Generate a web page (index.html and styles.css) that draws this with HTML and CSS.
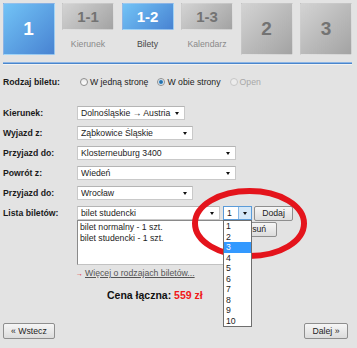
FILE: index.html
```html
<!DOCTYPE html>
<html lang="pl">
<head>
    <meta charset="UTF-8">
    <meta name="viewport" content="width=device-width, initial-scale=1.0">
    <title>Bilety</title>
    <link rel="stylesheet" href="styles.css">
</head>
<body>
    <div class="page">
        <div class="steps">
            <div class="step"><div class="box big blue">1</div></div>
            <div class="step"><div class="box small gray">1-1</div><span class="step-label">Kierunek</span></div>
            <div class="step"><div class="box small blue">1-2</div><span class="step-label current">Bilety</span></div>
            <div class="step"><div class="box small gray">1-3</div><span class="step-label">Kalendarz</span></div>
            <div class="step"><div class="box big gray">2</div></div>
            <div class="step"><div class="box big gray">3</div></div>
        </div>
        <div class="rule"></div>

        <div class="type-row">
            <span class="label">Rodzaj biletu:</span>
            <label class="radio"><input type="radio" name="typ"><span>W jedną stronę</span></label>
            <label class="radio"><input type="radio" name="typ" checked><span>W obie strony</span></label>
            <label class="radio disabled"><input type="radio" name="typ" disabled><span>Open</span></label>
        </div>

        <div class="rows">
            <div class="row">
                <span class="label">Kierunek:</span>
                <div class="sel w-kier"><span class="val">Dolnośląskie → Austria</span><span class="arrow"></span></div>
            </div>
            <div class="row">
                <span class="label">Wyjazd z:</span>
                <div class="sel w-mid"><span class="val">Ząbkowice Śląskie</span><span class="arrow"></span></div>
            </div>
            <div class="row">
                <span class="label">Przyjazd do:</span>
                <div class="sel w-long"><span class="val">Klosterneuburg 3400</span><span class="arrow"></span></div>
            </div>
            <div class="row">
                <span class="label">Powrót z:</span>
                <div class="sel w-long"><span class="val">Wiedeń</span><span class="arrow"></span></div>
            </div>
            <div class="row">
                <span class="label">Przyjazd do:</span>
                <div class="sel w-mid"><span class="val">Wrocław</span><span class="arrow"></span></div>
            </div>
            <div class="row tight">
                <span class="label">Lista biletów:</span>
                <div class="sel w-ticket"><span class="val">bilet studencki</span><span class="arrow"></span></div>
                <div class="sel qty focused"><span class="val">1</span><span class="arrow-btn"><span class="arrow"></span></span></div>
                <button class="btn add" type="button">Dodaj</button>
            </div>
            <div class="list-row">
                <div class="listbox">
                    <div>bilet normalny - 1 szt.</div>
                    <div>bilet studencki - 1 szt.</div>
                </div>
                <button class="btn remove" type="button">Usuń</button>
            </div>
            <div class="more">
                <span class="more-arrow">→</span><a href="#">Więcej o rodzajach biletów...</a>
            </div>
        </div>

        <div class="total">Cena łączna: <span class="price">559 zł</span></div>

        <div class="nav">
            <button class="btn" type="button">« Wstecz</button>
            <button class="btn" type="button">Dalej »</button>
        </div>

        <svg class="mark" width="357" height="348" viewBox="0 0 357 348">
            <ellipse cx="249.5" cy="223.5" rx="54.5" ry="32.5" fill="none" stroke="#e4141c" stroke-width="6"/>
        </svg>

        <div class="dropdown">
            <div>1</div>
            <div>2</div>
            <div class="hl">3</div>
            <div>4</div>
            <div>5</div>
            <div>6</div>
            <div>7</div>
            <div>8</div>
            <div>9</div>
            <div>10</div>
        </div>
    </div>
</body>
</html>
```

FILE: styles.css
```css
body {
    margin: 0;
    background-color: #e3e3e3;
    font-family: "Liberation Sans", Arial, sans-serif;
    font-size: 8.7px;
    color: #1c1c1c;
}
.page {
    position: relative;
    width: 357px;
    height: 348px;
    padding: 3px 0 0 2.5px;
    box-sizing: border-box;
    overflow: hidden;
}

/* steps header */
.steps {
    display: flex;
    gap: 7.5px;
    align-items: flex-start;
    height: 52px;
}
.step {
    width: 52px;
    display: flex;
    flex-direction: column;
    align-items: center;
}
.box {
    width: 52px;
    display: flex;
    align-items: center;
    justify-content: center;
    font-weight: bold;
    box-sizing: border-box;
    border: 1px solid rgba(255,255,255,0.35);
}
.box.big {
    height: 52px;
    font-size: 19px;
}
.box.small {
    height: 27px;
    font-size: 15px;
}
.box.blue {
    background: linear-gradient(135deg, #72c3f6, #4883d2);
    color: #fff;
}
.box.gray {
    background: linear-gradient(135deg, #d3d3d3, #a3a3a3);
    color: #737373;
}
.step-label {
    margin-top: 9px;
    color: #8a8a8a;
}
.step-label.current {
    color: #474747;
}
.rule {
    margin-top: 7px;
    width: 349.5px;
    height: 1px;
    background-color: #4a86cc;
    border-top: 1px solid #8cb5e5;
    box-shadow: 0 1px 0 #f3f3f3;
}

/* ticket type */
.label {
    width: 74px;
    flex-shrink: 0;
    padding-left: 0.5px;
    font-weight: bold;
    color: #1a1a1a;
}
.type-row {
    display: flex;
    align-items: center;
    height: 14px;
    margin-top: 11px;
}
.radio {
    display: flex;
    align-items: center;
    margin-left: 3px;
    margin-right: 6px;
}
.radio input {
    appearance: none;
    width: 8px;
    height: 8px;
    margin: 0 2px 0 0;
    border: 1px solid #8d8d8d;
    border-radius: 50%;
    background: linear-gradient(#e8e8e8, #fff);
    box-sizing: border-box;
}
.radio input:checked {
    background: radial-gradient(circle, #1d5b8e 0, #3e8ac4 1.6px, #cfe2f2 2.4px, #fff 3px);
}
.radio.disabled {
    color: #a8a8a8;
}
.radio.disabled input {
    border-color: #c6c6c6;
    background: #ececec;
}

/* rows */
.rows {
    margin-top: 17px;
}
.row {
    display: flex;
    align-items: center;
    height: 14px;
    margin-bottom: 6px;
}
.row.tight {
    margin-bottom: 0;
}
.sel {
    display: flex;
    align-items: center;
    height: 14px;
    box-sizing: border-box;
    background-color: #fff;
    border: 1px solid #c9c9c9;
    border-top-color: #b4b4b4;
    padding-left: 3px;
}
.sel .val {
    flex: 1;
    white-space: nowrap;
    overflow: hidden;
}
.arrow {
    width: 0;
    height: 0;
    border-left: 2.5px solid transparent;
    border-right: 2.5px solid transparent;
    border-top: 3px solid #111;
    margin-right: 5px;
}
.w-kier { width: 108px; }
.w-mid { width: 116px; }
.w-long { width: 159px; }
.w-ticket { width: 143px; }
.qty {
    width: 29px;
    margin-left: 3px;
    padding-right: 0;
}
.qty.focused {
    border-color: #5b9bd8;
}
.arrow-btn {
    display: flex;
    align-items: center;
    justify-content: center;
    width: 12px;
    height: 100%;
    background-color: #d5e8f8;
    border-left: 1px solid #86b7e6;
}
.arrow-btn .arrow {
    margin-right: 0;
}
.btn {
    font-family: "Liberation Sans", Arial, sans-serif;
    font-size: 8.7px;
    color: #1c1c1c;
    height: 15px;
    padding: 0 6px;
    border: 1px solid #8e8e8e;
    border-radius: 2px;
    background: linear-gradient(#f6f6f6, #dcdcdc);
    line-height: 13px;
}
.add {
    width: 39px;
    margin-left: 2px;
}
.list-row {
    display: flex;
    align-items: flex-start;
    padding-left: 74.5px;
}
.listbox {
    width: 155px;
    height: 45px;
    box-sizing: border-box;
    background-color: #fff;
    border: 1px solid #8a8a8a;
    border-right-color: #c2c2c2;
    border-bottom-color: #c2c2c2;
    padding: 1px 2px;
    line-height: 11px;
}
.remove {
    width: 42px;
    margin: 2px 0 0 3px;
}
.more {
    margin-top: 3px;
    padding-left: 73.5px;
    height: 10px;
    line-height: 10px;
}
.more-arrow {
    color: #e4141c;
    font-size: 7px;
    margin-right: 2px;
}
.more a {
    color: #555;
}

.total {
    margin-top: 11px;
    padding-left: 104.5px;
    font-size: 10.5px;
    font-weight: bold;
    color: #111;
    line-height: 12px;
}
.price {
    color: #f01818;
}
.nav {
    display: flex;
    justify-content: space-between;
    width: 344.5px;
    margin-top: 22px;
    padding-left: 0.5px;
}
.nav .btn {
    height: 16px;
    padding: 0 7px;
}

/* overlays */
.mark {
    position: absolute;
    left: 0;
    top: 0;
    pointer-events: none;
}
.dropdown {
    position: absolute;
    left: 223px;
    top: 220px;
    width: 29px;
    box-sizing: border-box;
    background-color: #fff;
    border: 1px solid #6e6e6e;
}
.dropdown div {
    height: 10.5px;
    line-height: 10.5px;
    padding-left: 2px;
}
.dropdown .hl {
    background-color: #3399ff;
    color: #fff;
}
```
